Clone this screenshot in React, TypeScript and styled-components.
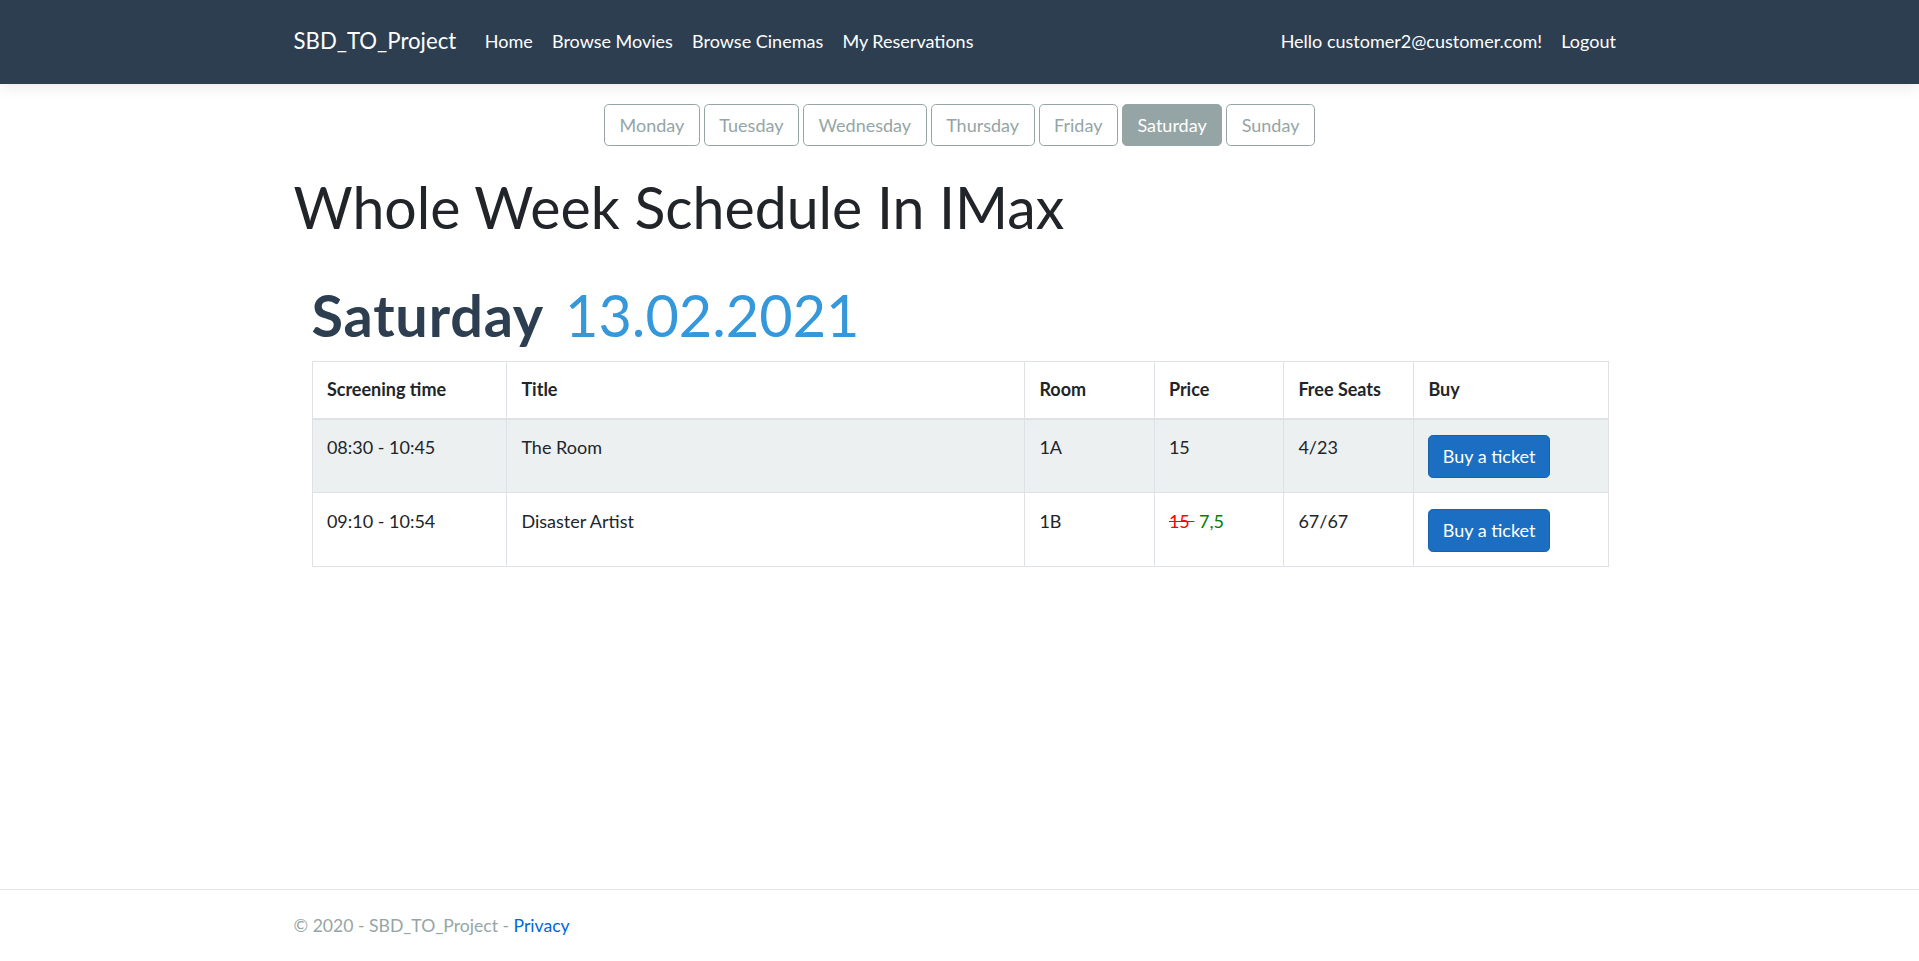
import React from "react";
import styled, { createGlobalStyle } from "styled-components";

const GlobalStyle = createGlobalStyle`
  html, body { margin: 0; padding: 0; }
  body {
    font-family: Lato, "Open Sans", "Liberation Sans", sans-serif;
    font-size: 18px;
    line-height: 1.5;
    color: #212529;
    background: #fff;
  }
  * { box-sizing: border-box; }
`;

const Page = styled.div`
  display: flex;
  flex-direction: column;
  min-height: 100vh;
`;

const Container = styled.div`
  width: 1332px;
  margin: 0 auto;
`;

const NavBar = styled.nav`
  height: 84px;
  background: #2c3e50;
  box-shadow: 0 4px 14px rgba(0, 0, 0, 0.08);
`;

const NavInner = styled(Container)`
  height: 100%;
  display: flex;
  align-items: center;
  padding-bottom: 2px;
`;

const Brand = styled.a`
  font-size: 22.2px;
  color: #fff;
  text-decoration: none;
  margin-right: 19px;
  line-height: 1.5;
`;

const NavList = styled.ul<{ $grow?: boolean }>`
  display: flex;
  list-style: none;
  margin: 0;
  padding: 0;
  flex: ${(p) => (p.$grow ? 1 : "none")};
`;

const NavLink = styled.a`
  display: block;
  padding: 9.6px;
  color: #fff;
  text-decoration: none;
  font-size: 18px;
`;

const NavText = styled.span`
  display: block;
  padding: 9.6px;
  color: #fff;
  font-size: 18px;
`;

const Main = styled(Container)`
  flex: 1;
  padding-bottom: 40px;
`;

const DayGroup = styled.div`
  display: flex;
  justify-content: center;
  gap: 4px;
  margin-top: 20px;
`;

const DayButton = styled.a<{ $active?: boolean }>`
  display: inline-block;
  height: 42px;
  padding: 0 14.5px;
  line-height: 40px;
  font-size: 18px;
  border: 1px solid #95a5a6;
  border-radius: 4.8px;
  color: ${(p) => (p.$active ? "#fff" : "#95a5a6")};
  background: ${(p) => (p.$active ? "#95a5a6" : "#fff")};
  text-decoration: none;
  cursor: pointer;
`;

const Title = styled.h1`
  font-size: 57.2px;
  font-weight: 400;
  line-height: 1.2;
  margin: 27px 0 0;
  color: #212529;
`;

const Section = styled.div`
  padding: 0 18px;
  margin-top: 38px;
`;

const DayHeading = styled.h1`
  display: flex;
  align-items: baseline;
  gap: 21px;
  font-size: 57.6px;
  line-height: 1.2;
  margin: 0 0 12px;
`;

const DayName = styled.span`
  font-weight: 700;
  color: #2c3e50;
  letter-spacing: 0.8px;
`;

const DateText = styled.span`
  font-weight: 400;
  color: #3498db;
`;

const Table = styled.table`
  width: 100%;
  border-collapse: collapse;
  table-layout: fixed;
  border: 1px solid #dee2e6;
`;

const Th = styled.th`
  text-align: left;
  font-weight: 700;
  padding: 14.4px;
  border: 1px solid #dee2e6;
  border-bottom: 2px solid #dee2e6;
  vertical-align: bottom;
  line-height: 27px;
`;

const Row = styled.tr<{ $striped?: boolean }>`
  background: ${(p) => (p.$striped ? "#ecf0f1" : "#fff")};
`;

const Td = styled.td`
  padding: 14.4px;
  border: 1px solid #dee2e6;
  vertical-align: top;
  line-height: 27px;
`;

const OldPrice = styled.del`
  color: red;
`;

const NewPrice = styled.span`
  color: green;
`;

const BuyButton = styled.button`
  font-family: inherit;
  font-size: 18px;
  line-height: 27px;
  padding: 7px 13.4px;
  margin-top: 1px;
  color: #fff;
  background: #1b6ec2;
  border: 1px solid #1861ac;
  border-radius: 4.8px;
  cursor: pointer;
`;

const Footer = styled.footer`
  border-top: 1px solid #e5e5e5;
  height: 72px;
  line-height: 72px;
  white-space: nowrap;
  color: #95a5a6;
  font-size: 17.6px;
`;

const FooterLink = styled.a`
  color: #0366d6;
  text-decoration: none;
`;

const days = ["Monday", "Tuesday", "Wednesday", "Thursday", "Friday", "Saturday", "Sunday"];

const colWidths = [194.5, 518, 129.5, 129.5, 130, 194.5];

type Screening = {
  time: string;
  title: string;
  room: string;
  price: React.ReactNode;
  seats: string;
};

const screenings: Screening[] = [
  { time: "08:30 - 10:45", title: "The Room", room: "1A", price: "15", seats: "4/23" },
  {
    time: "09:10 - 10:54",
    title: "Disaster Artist",
    room: "1B",
    price: (
      <>
        <OldPrice>{"15\u00a0"}</OldPrice>
        {"\u00a0"}
        <NewPrice>7,5</NewPrice>
      </>
    ),
    seats: "67/67",
  },
];

export default function App() {
  return (
    <>
      <GlobalStyle />
      <Page>
        <NavBar>
          <NavInner>
            <Brand href="#">SBD_TO_Project</Brand>
            <NavList $grow>
              <li><NavLink href="#">Home</NavLink></li>
              <li><NavLink href="#">Browse Movies</NavLink></li>
              <li><NavLink href="#">Browse Cinemas</NavLink></li>
              <li><NavLink href="#">My Reservations</NavLink></li>
            </NavList>
            <NavList>
              <li><NavText>Hello customer2@customer.com!</NavText></li>
              <li><NavLink href="#">Logout</NavLink></li>
            </NavList>
          </NavInner>
        </NavBar>
        <Main>
          <DayGroup>
            {days.map((d) => (
              <DayButton key={d} $active={d === "Saturday"}>{d}</DayButton>
            ))}
          </DayGroup>
          <Title>Whole Week Schedule In IMax</Title>
          <Section>
            <DayHeading>
              <DayName>Saturday</DayName>
              <DateText>13.02.2021</DateText>
            </DayHeading>
            <Table>
              <colgroup>
                {colWidths.map((w, i) => (
                  <col key={i} style={{ width: w }} />
                ))}
              </colgroup>
              <thead>
                <tr>
                  <Th>Screening time</Th>
                  <Th>Title</Th>
                  <Th>Room</Th>
                  <Th>Price</Th>
                  <Th>Free Seats</Th>
                  <Th>Buy</Th>
                </tr>
              </thead>
              <tbody>
                {screenings.map((s, i) => (
                  <Row key={s.time} $striped={i % 2 === 0}>
                    <Td>{s.time}</Td>
                    <Td>{s.title}</Td>
                    <Td>{s.room}</Td>
                    <Td>{s.price}</Td>
                    <Td>{s.seats}</Td>
                    <Td><BuyButton>Buy a ticket</BuyButton></Td>
                  </Row>
                ))}
              </tbody>
            </Table>
          </Section>
        </Main>
        <Footer>
          <Container>
            © 2020 - SBD_TO_Project - <FooterLink href="#">Privacy</FooterLink>
          </Container>
        </Footer>
      </Page>
    </>
  );
}
